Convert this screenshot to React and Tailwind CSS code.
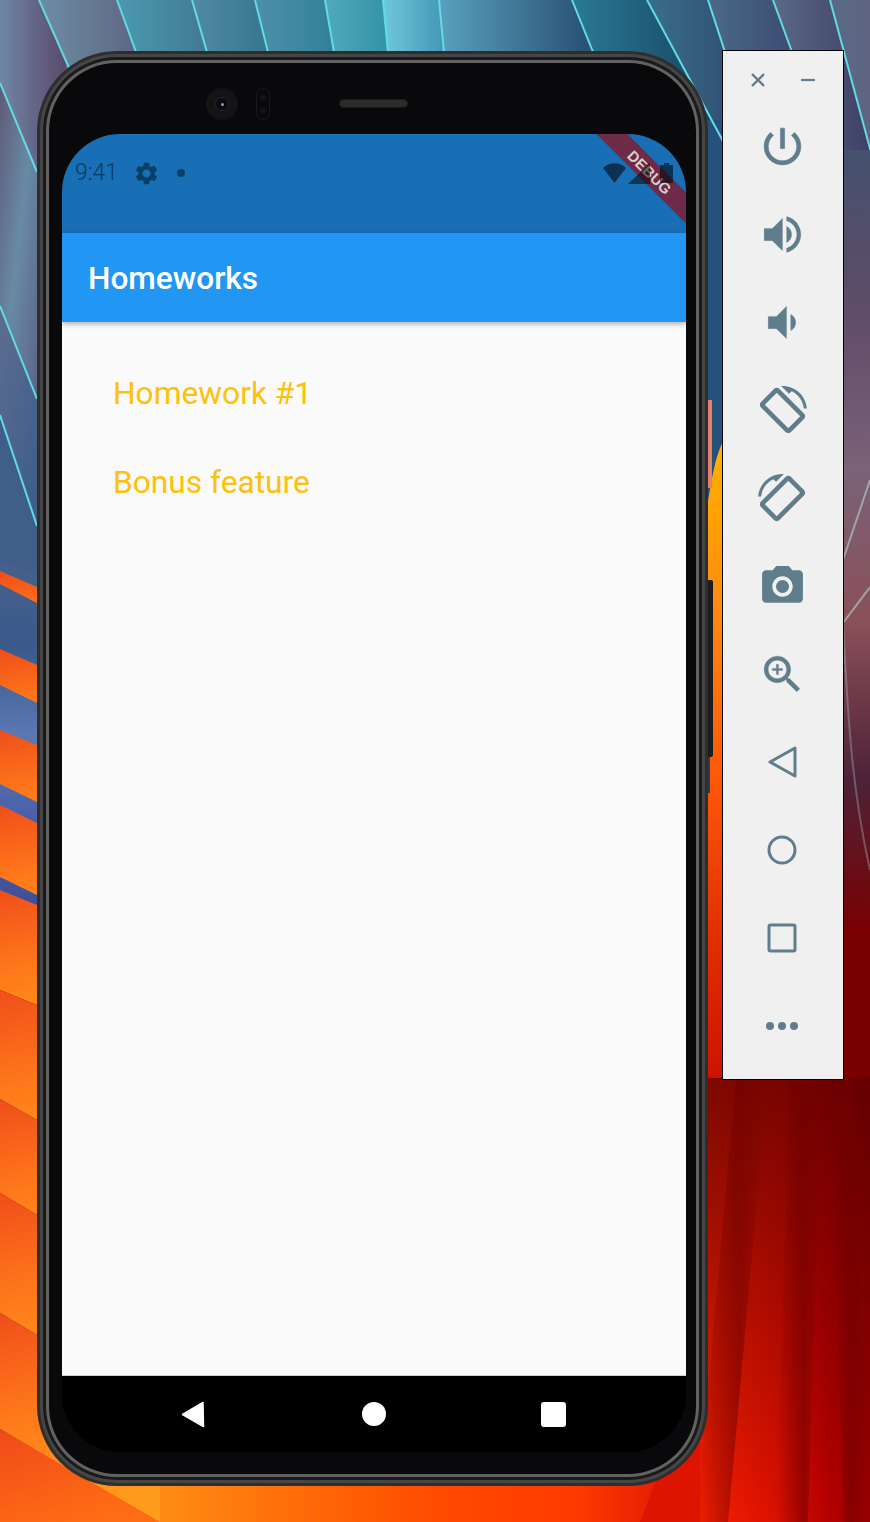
import React from 'react';

const ICON_COLOR = '#607d8b';

const paths = {
  power: 'M13 3h-2v10h2V3zm4.83 2.17l-1.42 1.42C17.99 7.86 19 9.81 19 12c0 3.87-3.13 7-7 7s-7-3.13-7-7c0-2.19 1.01-4.14 2.58-5.42L6.17 5.17C4.23 6.82 3 9.26 3 12c0 4.97 4.03 9 9 9s9-4.03 9-9c0-2.74-1.23-5.18-3.17-6.83z',
  volumeUp: 'M3 9v6h4l5 5V4L7 9H3zm13.5 3c0-1.77-1.02-3.29-2.5-4.03v8.05c1.48-.73 2.5-2.25 2.5-4.02zM14 3.23v2.06c2.89.86 5 3.54 5 6.71s-2.11 5.85-5 6.71v2.06c4.01-.91 7-4.49 7-8.77s-2.99-7.86-7-8.77z',
  volumeDown: 'M18.5 12c0-1.77-1.02-3.29-2.5-4.03v8.05c1.48-.73 2.5-2.25 2.5-4.02zM5 9v6h4l5 5V4L9 9H5z',
  rotateArc: 'M16.48 2.52c3.27 1.55 5.61 4.72 5.97 8.48h1.5C23.44 4.84 18.29 0 12 0l-.66.03 3.81 3.81 1.33-1.32z',
  rotatePhone: 'M10.23 1.75c-.59-.59-1.54-.59-2.12 0L1.75 8.11c-.59.59-.59 1.54 0 2.12l12.02 12.02c.59.59 1.54.59 2.12 0l6.36-6.36c.59-.59.59-1.54 0-2.12L10.23 1.75zm4.6 19.44L2.81 9.17l6.36-6.36 12.02 12.02-6.36 6.36z',
  camera: 'M9 2L7.17 4H4c-1.1 0-2 .9-2 2v12c0 1.1.9 2 2 2h16c1.1 0 2-.9 2-2V6c0-1.1-.9-2-2-2h-3.17L15 2H9zm3 15c-2.76 0-5-2.24-5-5s2.24-5 5-5 5 2.24 5 5-2.24 5-5 5zM12 8.8a3.2 3.2 0 1 0 0 6.4 3.2 3.2 0 0 0 0-6.4z',
  zoom: 'M15.5 14h-.79l-.28-.27C15.41 12.59 16 11.11 16 9.5 16 5.91 13.09 3 9.5 3S3 5.91 3 9.5 5.91 16 9.5 16c1.61 0 3.09-.59 4.23-1.57l.27.28v.79l5 4.99L20.49 19l-4.99-5zm-6 0C7.01 14 5 11.99 5 9.5S7.01 5 9.5 5 14 7.01 14 9.5 11.99 14 9.5 14zM12 10h-2v2H9v-2H7V9h2V7h1v2h2v1z',
  gear: 'M19.14 12.94c.04-.3.06-.61.06-.94 0-.32-.02-.64-.07-.94l2.03-1.58c.18-.14.23-.41.12-.61l-1.92-3.32c-.12-.22-.37-.29-.59-.22l-2.39.96c-.5-.38-1.03-.7-1.62-.94l-.36-2.54c-.04-.24-.24-.41-.48-.41h-3.84c-.24 0-.43.17-.47.41l-.36 2.54c-.59.24-1.13.57-1.62.94l-2.39-.96c-.22-.08-.47 0-.59.22L2.74 8.87c-.12.21-.08.47.12.61l2.03 1.58c-.05.3-.09.63-.09.94s.02.64.07.94l-2.03 1.58c-.18.14-.23.41-.12.61l1.92 3.32c.12.22.37.29.59.22l2.39-.96c.5.38 1.03.7 1.62.94l.36 2.54c.05.24.24.41.48.41h3.84c.24 0 .44-.17.47-.41l.36-2.54c.59-.24 1.13-.56 1.62-.94l2.39.96c.22.08.47 0 .59-.22l1.92-3.32c.12-.22.07-.47-.12-.61l-2.01-1.58zM12 15.6c-1.98 0-3.6-1.62-3.6-3.6s1.62-3.6 3.6-3.6 3.6 1.62 3.6 3.6-1.62 3.6-3.6 3.6z',
};

function Grad({ id, stops, x2 = 1, y2 = 0 }) {
  return (
    <linearGradient id={id} x1="0" y1="0" x2={x2} y2={y2}>
      {stops.map((c, i) => (
        <stop key={i} offset={i / (stops.length - 1)} stopColor={c} />
      ))}
    </linearGradient>
  );
}

// fan of panels along the top edge. edges are [x at y=0, x at y=52]
const topEdges = [
  [-40, -20], [39, 62], [117, 136], [192, 207], [255, 268], [325, 334], [383, 388],
  [439, 444], [572, 593], [647, 675], [708, 725], [773, 792], [830, 844], [900, 920],
];
const topColors = [
  ['#6f86a6', '#5a4a6a'],
  ['#6c8ea4', '#5a5878'],
  ['#4b9ab0', '#3f6f88'],
  ['#4f8aa5', '#2f6f88'],
  ['#4d90a8', '#2c7d95'],
  ['#50aab9', '#2f8fa5'],
  ['#6fc8dc', '#3d8fb0'],
  ['#5aa0bf', '#1a3a5c'],
  ['#2a7a95', '#153f5c'],
  ['#3a6f88', '#2c4770'],
  ['#4a6a88', '#36406a'],
  ['#5a6a85', '#3f3f66'],
  ['#5a6a85', '#665a77'],
];
const atY = (edge, y) => edge[0] + ((edge[1] - edge[0]) * y) / 52;

const leftLines = [[0, 83, 37, 172], [0, 306, 37, 399], [0, 415, 37, 526]];

// orange stripes on the left: [top edge y at 0, at 37, bottom edge y at 0, at 37]
const orangeBands = [
  [571, 587, 584, 603],
  [649, 665, 685, 703],
  [730, 745, 784, 802],
  [805, 823, 877, 895],
  [890, 905, 990, 1005],
  [990, 1005, 1099, 1120],
  [1099, 1120, 1193, 1215],
  [1193, 1215, 1313, 1335],
  [1313, 1335, 1429, 1451],
];
const bandY = (y0, y37) => y0 + ((y37 - y0) * 160) / 37;

// dark folds in the red curtain: [x top, x bottom, half width]
const folds = [
  [752, 712, 16],
  [806, 792, 16],
  [842, 856, 12],
];

function Wallpaper() {
  return (
    <svg className="absolute inset-0" width="870" height="1522" viewBox="0 0 870 1522">
      <defs>
        {topColors.map((c, i) => (
          <Grad key={i} id={`top${i}`} stops={c} />
        ))}
        <Grad id="leftA" stops={['#6f86a6', '#5a4a6a']} />
        <Grad id="leftB" stops={['#5f5a78', '#688aa4', '#5c6488']} x2={1} y2={1} />
        <Grad id="leftC" stops={['#5e6d90', '#3f5f8a']} x2={0.6} y2={1} />
        <Grad id="leftD" stops={['#47618c', '#3a5a8a', '#5a78b4', '#4a5ea8', '#3c4f96']} x2={0} y2={1} />
        <Grad id="band" stops={['#f04e1a', '#ff7a1a', '#ff9c1c']} x2={0.2} y2={1} />
        <Grad id="rightPanel" stops={['#4d6484', '#45506e', '#5f4c68', '#7a6278', '#8a5058', '#4e2238', '#7a0000', '#7a0000']} x2={0} y2={1} />
        <Grad id="rightStrip" stops={['#ffb400', '#ff8a10', '#ff5a08', '#e03000', '#c81000']} x2={0} y2={1} />
        <Grad id="bottom" stops={['#ff7f16', '#ff8a14', '#ff6a08', '#ff4a00', '#ff3a00', '#d81000']} />
        <Grad id="redBase" stops={['#f42000', '#e81800', '#d80e00', '#b80000', '#960000']} />
        <Grad id="redShade" stops={['#5a0000', '#5a0000']} x2={0} y2={1} />
        <linearGradient id="redFade" x1="0" y1="0" x2="0" y2="1">
          <stop offset="0" stopColor="#500000" stopOpacity="0.72" />
          <stop offset="1" stopColor="#500000" stopOpacity="0" />
        </linearGradient>
        <linearGradient id="fold" x1="0" y1="0" x2="1" y2="0">
          <stop offset="0" stopColor="#700000" stopOpacity="0" />
          <stop offset="0.6" stopColor="#700000" stopOpacity="0.55" />
          <stop offset="1" stopColor="#700000" stopOpacity="0" />
        </linearGradient>
        <Grad id="lastBand" stops={['#ef4a1a', '#ff6c14']} x2={0.5} y2={1} />
      </defs>

      <rect x="844" y="0" width="26" height="1090" fill="url(#rightPanel)" />
      {topColors.map((c, i) => {
        const a = topEdges[i];
        const b = topEdges[i + 1];
        return (
          <polygon
            key={i}
            points={`${a[0]},0 ${b[0]},0 ${atY(b, 150)},150 ${atY(a, 150)},150`}
            fill={`url(#top${i})`}
          />
        );
      })}

      <polygon points="0,0 39,0 66,60 60,130 37,172 0,83" fill="url(#leftA)" />
      <polygon points="0,83 37,172 37,399 0,306" fill="url(#leftB)" />
      <polygon points="0,306 37,399 37,526 0,415" fill="url(#leftC)" />
      <rect x="0" y="560" width="37" height="350" fill="url(#leftD)" />
      <polygon points="0,415 37,526 37,575 0,560" fill="#3f5f8a" />

      <rect x="37" y="1380" width="670" height="142" fill="url(#bottom)" />
      {orangeBands.map((b, i) => (
        <polygon
          key={i}
          points={`0,${b[0]} 160,${bandY(b[0], b[1])} 160,${bandY(b[2], b[3])} 0,${b[2]}`}
          fill="url(#band)"
        />
      ))}
      <polygon points="0,1429 160,1522 0,1522" fill="url(#lastBand)" />
      <polygon points="640,1522 660,1470 715,1380 715,1522" fill="#dd1500" />

      {/* strip between the phone and the toolbar */}
      <rect x="700" y="120" width="24" height="430" fill="#24527a" />
      <path d="M724 440 C712 460 710 500 704 520 L704 1100 L724 1100 Z" fill="url(#rightStrip)" />

      {/* red curtain under the toolbar */}
      <rect x="700" y="1078" width="170" height="444" fill="url(#redBase)" />
      <rect x="700" y="1078" width="170" height="444" fill="url(#redFade)" />
      {folds.map((f, i) => (
        <polygon
          key={i}
          points={`${f[0] - f[2]},1078 ${f[0] + f[2]},1078 ${f[1] + f[2]},1522 ${f[1] - f[2]},1522`}
          fill="url(#fold)"
        />
      ))}

      <path d="M843 560 L870 480 M843 623 L870 587" stroke="#a8c8c0" strokeOpacity="0.7" strokeWidth="2" fill="none" />
      <path d="M843 623 C848 720 852 790 870 870" stroke="#a8c8c0" strokeOpacity="0.35" strokeWidth="2" fill="none" />

      {topEdges.slice(1, -1).map((e, i) => (
        <line key={i} x1={e[0]} y1="0" x2={atY(e, 150)} y2="150" stroke="#62dbe4" strokeWidth="2" />
      ))}
      {leftLines.map((l, i) => (
        <line key={i} x1={l[0]} y1={l[1]} x2={l[2]} y2={l[3]} stroke="#62dbe4" strokeWidth="2" />
      ))}
    </svg>
  );
}

function ToolIcon({ d, flip, weight = 0.3, arc }) {
  return (
    <div className="h-[88px] flex items-center justify-center">
      <svg viewBox="0 0 24 24" fill={ICON_COLOR} className={flip ? 'size-[49px] -scale-x-100' : 'size-[49px]'}>
        {arc && <path d={arc} />}
        <path d={d} stroke={ICON_COLOR} strokeWidth={weight} />
      </svg>
    </div>
  );
}

function OutlineIcon({ children }) {
  return (
    <div className="h-[88px] flex items-center justify-center">
      <svg viewBox="0 0 36 36" fill="none" stroke={ICON_COLOR} strokeWidth="3" strokeLinejoin="round" className="size-9">
        {children}
      </svg>
    </div>
  );
}

function Toolbar() {
  return (
    <div className="ml-[14px] -mt-px w-[122px] h-[1030px] border border-black bg-[#f0f0f0] shrink-0">
      <div className="h-[51px] pt-[7px] flex items-center justify-center gap-[34px]">
        <svg viewBox="0 0 16 16" stroke={ICON_COLOR} strokeWidth="2.4" className="size-4">
          <path d="M2 2l12 12M14 2L2 14" />
        </svg>
        <svg viewBox="0 0 16 16" stroke={ICON_COLOR} strokeWidth="2.2" className="size-4">
          <path d="M1 8h14" />
        </svg>
      </div>
      <div className="pr-[2px]">
        <ToolIcon d={paths.power} />
        <ToolIcon d={paths.volumeUp} weight={0.1} />
        <ToolIcon d={paths.volumeDown} weight={0.1} />
        <ToolIcon d={paths.rotatePhone} arc={paths.rotateArc} weight={0.8} />
        <ToolIcon d={paths.rotatePhone} arc={paths.rotateArc} weight={0.8} flip />
        <ToolIcon d={paths.camera} weight={0} />
        <ToolIcon d={paths.zoom} weight={0.15} />
        <OutlineIcon>
          <path d="M31 4 L31 32 L6 18 Z" />
        </OutlineIcon>
        <OutlineIcon>
          <circle cx="18" cy="18" r="13" />
        </OutlineIcon>
        <OutlineIcon>
          <rect x="5" y="5" width="26" height="26" rx="1.5" />
        </OutlineIcon>
        <div className="h-[88px] flex items-center justify-center gap-[4px]">
          <span className="size-2 rounded-full bg-[#607d8b]" />
          <span className="size-2 rounded-full bg-[#607d8b]" />
          <span className="size-2 rounded-full bg-[#607d8b]" />
        </div>
      </div>
    </div>
  );
}

function StatusBar() {
  return (
    <div className="relative h-[99px] bg-[#196fb5] shrink-0">
      <div className="absolute left-[488px] top-[27px] w-[200px] h-[22px] pt-[2px] rotate-45 bg-[#6e2a47] flex items-center justify-center">
        <span className="text-[15px] font-bold text-[#d8d0d0] tracking-[0.2px] font-['Liberation_Sans',sans-serif]">DEBUG</span>
      </div>
      <div className="relative h-[78px] flex items-center px-[13px]">
        <span className="text-[23px] font-light text-[#0a3a60]">9:41</span>
        <svg viewBox="0 0 24 24" fill="#0c3f66" className="size-[27px] ml-[15px]">
          <path d={paths.gear} />
        </svg>
        <span className="size-2 rounded-full bg-[#0c3f66] ml-[17px]" />
        <div className="ml-auto flex items-center">
          <svg width="23" height="20" viewBox="0 0 23 20" fillOpacity="0.55">
            <path d="M0 5 C6 -1.5 17 -1.5 23 5 L11.5 20 Z" />
          </svg>
          <svg width="22" height="21" viewBox="0 0 22 21" fillOpacity="0.5" className="ml-[2px]">
            <path d="M0 21 L22 0 L22 21 Z" />
          </svg>
          <svg width="13" height="20" viewBox="0 0 13 20" fillOpacity="0.55" className="ml-[10px]">
            <path d="M4 0h5v2h4v18H0V2h4z" />
          </svg>
        </div>
      </div>
    </div>
  );
}

function Screen() {
  return (
    <div className="ml-[13px] w-[624px] h-[1318px] rounded-[58px] overflow-hidden flex flex-col bg-black shrink-0">
      <StatusBar />
      <div className="relative z-10 h-[89px] pt-[3px] shrink-0 bg-[#2196f3] flex items-center pl-[26px] shadow-[0_2px_5px_rgba(0,0,0,0.3)]">
        <span className="text-[31.6px] font-medium text-white">Homeworks</span>
      </div>
      <div className="flex-1 bg-[#fafafa] pt-[27px] pl-[51px] border-b border-[#cfcfcf]">
        <div className="h-[89px] flex items-center text-[31.7px] text-[#ffc107]">Homework #1</div>
        <div className="h-[89px] flex items-center text-[31.7px] text-[#ffc107]">Bonus feature</div>
      </div>
      <div className="h-[76px] shrink-0 bg-black flex items-center justify-center">
        <div className="w-[180px] flex justify-center">
          <svg width="24" height="27" viewBox="0 0 24 27" fill="#fff" className="mr-[3px]">
            <path d="M22 1.5 L22.5 25.5 L1.5 13.5 Z" stroke="#fff" strokeWidth="1.5" strokeLinejoin="round" />
          </svg>
        </div>
        <div className="w-[180px] flex justify-center">
          <span className="size-6 rounded-full bg-white" />
        </div>
        <div className="w-[180px] flex justify-center">
          <span className="size-[25px] mr-[2px] rounded-[3px] bg-white" />
        </div>
      </div>
    </div>
  );
}

function Phone() {
  return (
    <div className="relative w-[671px] h-[1435px] rounded-[80px] bg-[#2e2e2e] p-[3px] shrink-0">
      <div className="absolute left-[671px] top-[349px] w-[4px] h-[88px] bg-[#e5806c]" />
      <div className="absolute left-[671px] top-[529px] w-[5px] h-[177px] rounded-r-[2px] bg-[#1c1c1e]" />
      <div className="absolute left-[671px] top-[706px] w-[2px] h-[36px] bg-[#2a3a50]" />
      <div className="w-full h-full rounded-[77px] bg-[#464646] p-[3px]">
        <div className="w-full h-full rounded-[74px] bg-[#1a1a1a] p-[3px]">
          <div className="w-full h-full rounded-[71px] bg-[#626262] p-[3px]">
            <div className="w-full h-full rounded-[68px] bg-[#09090b]">
              <div className="h-[71px] pt-[25px] pl-[157px] flex items-start">
                <div className="size-8 rounded-full bg-[#141416] flex items-center justify-center">
                  <div className="size-[14px] rounded-full bg-[#0a0a10] border border-[#23232b] flex items-center justify-center">
                    <span className="size-[3px] rounded-full bg-[#8f94c0]" />
                  </div>
                </div>
                <div className="ml-[18px] w-[14px] h-8 rounded-full border border-[#1a1a1c] flex flex-col items-center justify-around py-[2px]">
                  <span className="size-[6px] rounded-full bg-[#141416]" />
                  <span className="size-[6px] rounded-full bg-[#141416]" />
                </div>
                <div className="ml-[69px] mt-[11px] w-[69px] h-[9px] rounded-full bg-[#2b2b2b] border border-[#1a1a1a]" />
              </div>
              <Screen />
            </div>
          </div>
        </div>
      </div>
    </div>
  );
}

export default function App() {
  return (
    <div className="relative w-[870px] h-[1522px] overflow-hidden bg-[#1c1c1c] font-['Roboto',sans-serif]">
      <Wallpaper />
      <div className="relative flex items-start pl-[37px] pt-[51px]">
        <Phone />
        <Toolbar />
      </div>
    </div>
  );
}
